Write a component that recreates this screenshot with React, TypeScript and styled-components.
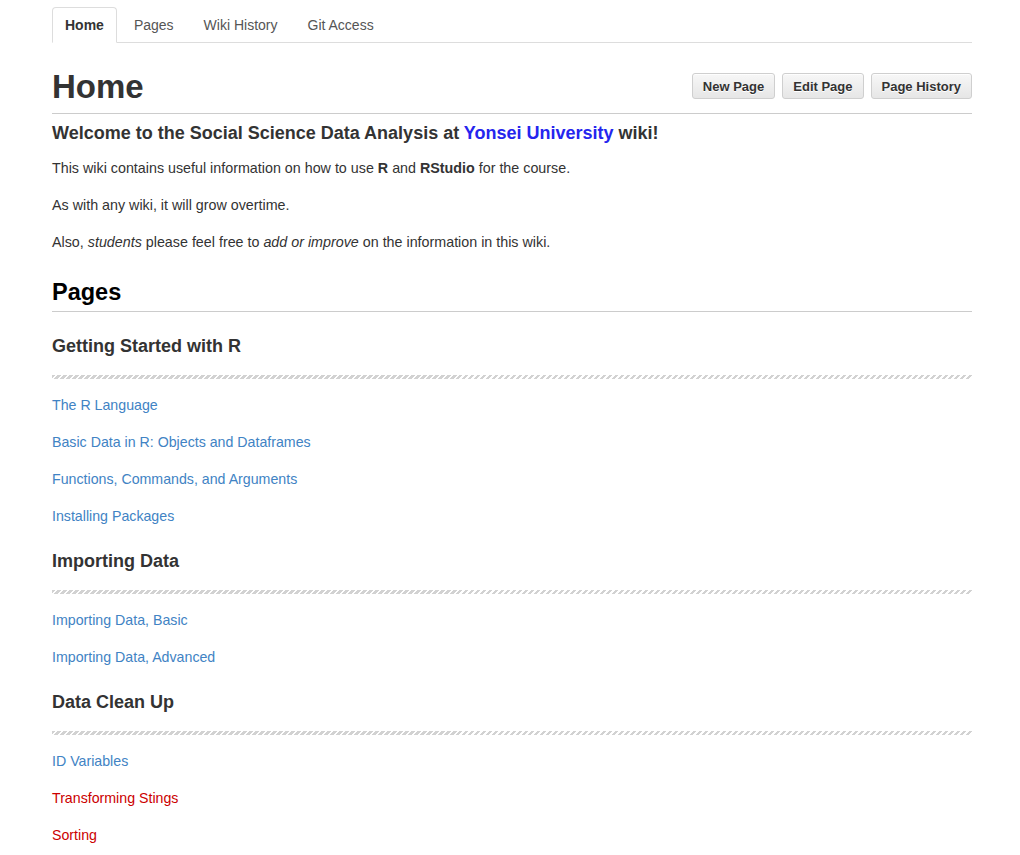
import React from "react";
import styled, { createGlobalStyle } from "styled-components";

const GlobalStyle = createGlobalStyle`
  html, body { margin: 0; padding: 0; background: #fff; }
  body {
    font-family: "Liberation Sans", Helvetica, Arial, sans-serif;
    color: #333;
    font-size: 14px;
  }
`;

const Page = styled.div`
  width: 920px;
  padding: 7px 0 0 52px;
`;

const Tabs = styled.ul`
  display: flex;
  list-style: none;
  margin: 0;
  padding: 0;
  border-bottom: 1px solid #ddd;
`;

const Tab = styled.li<{ $active?: boolean }>`
  margin: 0 4px -1px 0;
  padding: 8px 12px;
  line-height: 18px;
  font-size: 14px;
  border: 1px solid ${(p) => (p.$active ? "#ddd" : "transparent")};
  border-bottom-color: ${(p) => (p.$active ? "#fff" : "transparent")};
  border-radius: 4px 4px 0 0;
  background: ${(p) => (p.$active ? "#fff" : "transparent")};
  color: ${(p) => (p.$active ? "#333" : "#555")};
  font-weight: ${(p) => (p.$active ? "bold" : "normal")};
`;

const Header = styled.div`
  display: flex;
  align-items: center;
  justify-content: space-between;
  margin-top: 24px;
  padding-bottom: 6px;
  border-bottom: 1px solid #ccc;
`;

const Title = styled.h1`
  margin: 0;
  font-size: 33px;
  line-height: 40px;
  font-weight: bold;
  color: #333;
`;

const Actions = styled.div`
  display: flex;
  gap: 7px;
  margin-top: -2px;
`;

const Button = styled.span`
  display: inline-flex;
  align-items: center;
  height: 24px;
  padding: 0 10px;
  font-size: 13px;
  font-weight: bold;
  color: #333;
  text-shadow: 0 1px 0 #fff;
  border: 1px solid #cfcfcf;
  border-radius: 3px;
  background: linear-gradient(#f7f7f7, #e6e6e6);
  box-shadow: 0 1px 0 rgba(255, 255, 255, 0.8) inset;
`;

const Welcome = styled.h3`
  margin: 7px 0 0;
  font-size: 18px;
  line-height: 24px;
  font-weight: bold;
  color: #333;
`;

const BlueLink = styled.a`
  color: #2525ee;
  text-decoration: none;
`;

const Para = styled.p`
  margin: 12px 0 15px;
  line-height: 22px;
  font-size: 14.3px;
  color: #333;
  & + & { margin-top: 0; }
`;

const SectionTitle = styled.h2`
  margin: 24px 0 0;
  padding-bottom: 4px;
  font-size: 23.5px;
  line-height: 30px;
  font-weight: bold;
  color: #000;
  border-bottom: 1px solid #ccc;
`;

const Group = styled.h3`
  margin: 20px 0 15px;
  padding-bottom: 19px;
  font-size: 18px;
  line-height: 28px;
  font-weight: bold;
  color: #333;
  background-image: repeating-linear-gradient(
    135deg,
    #d2d2d2 0 2.3px,
    transparent 2.3px 4.24px
  );
  background-size: 100% 4px;
  background-position: left bottom;
  background-repeat: no-repeat;
`;

const LinkRow = styled.p`
  margin: 0 0 15px;
  line-height: 22px;
  font-size: 14.2px;
  &:last-child { margin-bottom: 0; }
`;

const WikiLink = styled.a<{ $missing?: boolean }>`
  color: ${(p) => (p.$missing ? "#cc0000" : "#4183c4")};
  text-decoration: none;
`;

const groups: { title: string; links: { t: string; missing?: boolean }[] }[] = [
  {
    title: "Getting Started with R",
    links: [
      { t: "The R Language" },
      { t: "Basic Data in R: Objects and Dataframes" },
      { t: "Functions, Commands, and Arguments" },
      { t: "Installing Packages" },
    ],
  },
  {
    title: "Importing Data",
    links: [{ t: "Importing Data, Basic" }, { t: "Importing Data, Advanced" }],
  },
  {
    title: "Data Clean Up",
    links: [
      { t: "ID Variables" },
      { t: "Transforming Stings", missing: true },
      { t: "Sorting", missing: true },
    ],
  },
];

export default function App() {
  return (
    <>
      <GlobalStyle />
      <Page>
        <Tabs>
          <Tab $active>Home</Tab>
          <Tab>Pages</Tab>
          <Tab>Wiki History</Tab>
          <Tab>Git Access</Tab>
        </Tabs>
        <Header>
          <Title>Home</Title>
          <Actions>
            <Button>New Page</Button>
            <Button>Edit Page</Button>
            <Button>Page History</Button>
          </Actions>
        </Header>
        <Welcome>
          Welcome to the Social Science Data Analysis at{" "}
          <BlueLink>Yonsei University</BlueLink> wiki!
        </Welcome>
        <Para>
          This wiki contains useful information on how to use <b>R</b> and{" "}
          <b>RStudio</b> for the course.
        </Para>
        <Para>As with any wiki, it will grow overtime.</Para>
        <Para>
          Also, <i>students</i> please feel free to <i>add or improve</i> on the
          information in this wiki.
        </Para>
        <SectionTitle>Pages</SectionTitle>
        {groups.map((g) => (
          <React.Fragment key={g.title}>
            <Group>{g.title}</Group>
            {g.links.map((l) => (
              <LinkRow key={l.t}>
                <WikiLink $missing={l.missing}>{l.t}</WikiLink>
              </LinkRow>
            ))}
          </React.Fragment>
        ))}
      </Page>
    </>
  );
}
